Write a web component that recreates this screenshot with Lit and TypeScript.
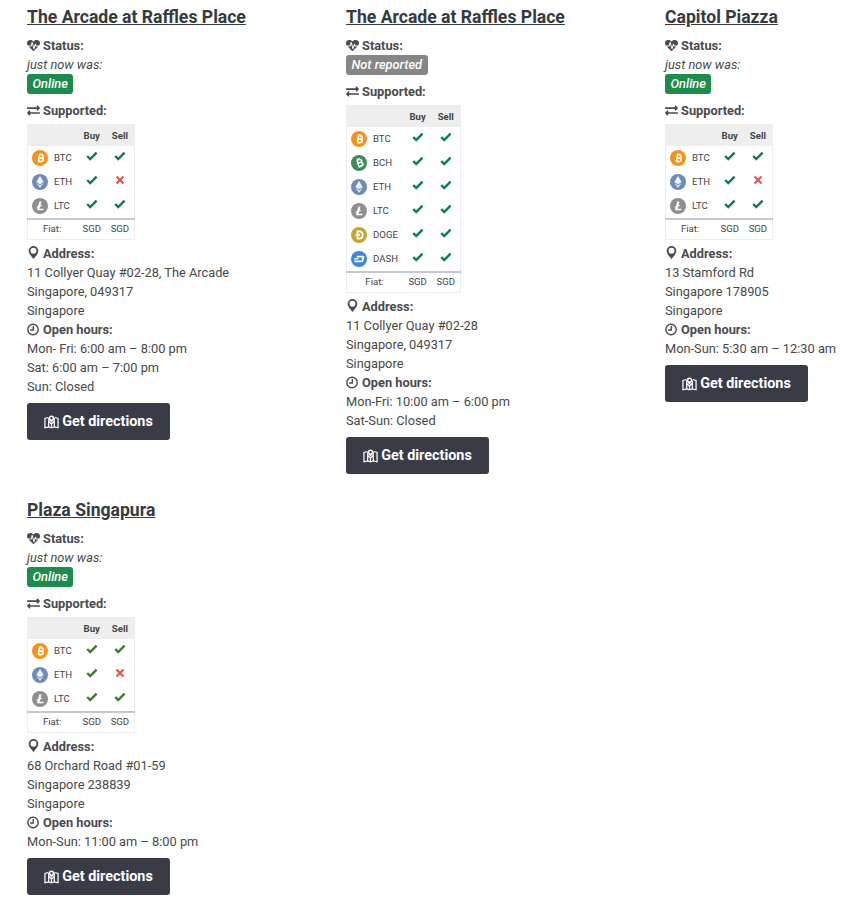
import { LitElement, html, css, svg } from 'lit';
import { customElement } from 'lit/decorators.js';

type Coin = { code: string; buy: boolean; sell: boolean };
type Shop = {
  name: string;
  ago?: string;
  online: boolean;
  coins: Coin[];
  address: string[];
  hours: string[];
  dark?: boolean;
};

const coinColors: Record<string, string> = {
  BTC: '#f7931a',
  BCH: '#3d8b57',
  ETH: '#6b8cb4',
  LTC: '#8e8e8e',
  DOGE: '#c2a633',
  DASH: '#3c85dc',
};

const coinGlyphs: Record<string, unknown> = {
  BTC: svg`<path fill="none" stroke="#fff" stroke-width="1.5" d="M6.400 4.700h2.700c1.300 0 2 .7 2 1.600s-.7 1.600-2 1.600H6.700m0 0h2.800c1.300 0 2.100.7 2.100 1.700s-.8 1.700-2.100 1.700H6.400M6.900 4.700v6.600M7.600 3.400v1.300M9.200 3.400v1.300M7.600 11.300v1.300M9.200 11.300v1.300" transform="rotate(10 8 8)"/>`,
  BCH: svg`<path fill="none" stroke="#fff" stroke-width="1.500" d="M6.400 4.700h2.700c1.300 0 2 .7 2 1.600s-.7 1.600-2 1.600H6.700m0 0h2.800c1.300 0 2.100.7 2.100 1.700s-.8 1.700-2.100 1.700H6.400M6.900 4.700v6.600M7.600 3.400v1.300M9.200 3.400v1.300M7.600 11.300v1.300M9.200 11.300v1.300" transform="rotate(-14 8 8)"/>`,
  ETH: svg`<path fill="#fff" opacity=".9" d="M8 2l3.700 6.100L8 10.300 4.300 8.100z"/><path fill="#fff" opacity=".75" d="M8 11.200l3.700-2.200L8 14.100 4.300 9z"/>`,
  LTC: svg`<path fill="#fff" d="M7.300 3.500h2.200L8.500 7.300l1.500-.6-.3 1.200-1.600.6-.6 2.200h4.100l-.4 1.600H4.900l.8-3-1.200.5.3-1.200 1.300-.5z"/>`,
  DOGE: svg`<path fill="none" stroke="#fff" stroke-width="1.800" d="M6.500 4.400h1.700c2.300 0 3.500 1.500 3.500 3.600s-1.200 3.600-3.500 3.600H6.500zM4.600 8h4.300"/>`,
  DASH: svg`<path fill="#fff" d="M6 4.800h6.300c.8 0 1.200.5 1 1.300l-.9 3.800c-.2.800-.8 1.300-1.700 1.300H3.200l.4-1.700h6.900l1-3H5.600zM3.200 7.200h4.500l-.4 1.400H2.800z"/>`,
};

const icons = {
  heart: html`<svg class="ic" viewBox="0 0 1792 1792"><path d="M1280 1024h305q-5 6-10 10.500t-9 7.500l-3 4-623 600q-18 18-44 18t-44-18l-624-602q-5-2-18-16h371q22 0 39-13.500t22-34.500l70-281 190 667q6 20 23 33t39 13q21 0 38-13t23-33l146-485 56 112q18 35 57 35zm512-428q0 145-103 300h-369l-111-221q-8-17-25.500-27t-36.500-8q-45 5-56 46l-129 430-196-686q-6-20-23.500-33t-39.500-13-39 13.500-22 34.500l-116 464h-423q-103-155-103-300 0-220 127-344t351-124q62 0 126.500 21.500t120 58 95.500 68.500 76 68q36-36 76-68t95.500-68.500 120-58 126.500-21.500q224 0 351 124t127 344z"/></svg>`,
  exchange: html`<svg class="ic" viewBox="0 0 512 512"><path d="M0 168v-16c0-13.255 10.745-24 24-24h360V80c0-21.367 25.899-32.042 40.971-16.971l80 80c9.372 9.373 9.372 24.569 0 33.941l-80 80C409.956 271.982 384 261.456 384 240v-48H24c-13.255 0-24-10.745-24-24zm488 152H128v-48c0-21.314-25.862-32.080-40.971-16.971l-80 80c-9.372 9.373-9.372 24.569 0 33.941l80 80C102.057 463.997 128 453.437 128 432v-48h360c13.255 0 24-10.745 24-24v-16c0-13.255-10.745-24-24-24z"/></svg>`,
  pin: html`<svg class="ic pin" viewBox="0 0 14 14"><path fill-rule="evenodd" d="M7 0a5.200 5.200 0 0 1 5.200 5.200c0 3.200-3.700 6.800-5.200 8.800-1.500-2-5.200-5.600-5.200-8.800A5.200 5.200 0 0 1 7 0zm0 2a3.200 3.200 0 1 0 0 6.400A3.200 3.200 0 0 0 7 2z"/></svg>`,
  clock: html`<svg class="ic" viewBox="0 0 14 14"><circle cx="6.500" cy="7" r="5.600" fill="none" stroke="currentColor" stroke-width="1.500"/><path fill="none" stroke="currentColor" stroke-width="1.500" d="M6.800 3.200v4.300H3.400"/></svg>`,
  map: html`<svg class="ic map" viewBox="0 0 16 14"><path fill="none" stroke="#fff" stroke-width="1.300" d="M4.600 2.200L1 3.200v10l4-1 3 1 3-1 4 1v-10l-3.600-1M5 3v9.200M11 3v9.200M5 6l3 3.500L11 6M8 9.500v3.500"/><path fill-rule="evenodd" fill="#fff" d="M8 0a3 3 0 0 1 3 3c0 1.800-2 3.300-3 4.800C7 6.300 5 4.800 5 3a3 3 0 0 1 3-3zm0 1.700a1.300 1.300 0 1 0 0 2.600 1.300 1.300 0 0 0 0-2.600z"/></svg>`,
};

const check = html`<svg class="mark" viewBox="0 0 12 10"><path fill="none" stroke="currentColor" stroke-width="2.400" d="M1.200 5l3 3 6.400-6.400"/></svg>`;
const cross = html`<svg class="mark no" viewBox="0 0 10 10"><path fill="none" stroke="currentColor" stroke-width="2.200" d="M1.500 1.500l7 7M8.500 1.500l-7 7"/></svg>`;

const three = [
  { code: 'BTC', buy: true, sell: true },
  { code: 'ETH', buy: true, sell: false },
  { code: 'LTC', buy: true, sell: true },
];

const shops: Shop[] = [
  {
    name: 'The Arcade at Raffles Place',
    ago: 'just now was:',
    online: true,
    coins: three,
    address: ['11 Collyer Quay #02-28, The Arcade', 'Singapore, 049317', 'Singapore'],
    hours: ['Mon- Fri: 6:00 am – 8:00 pm', 'Sat: 6:00 am – 7:00 pm', 'Sun: Closed'],
  },
  {
    name: 'The Arcade at Raffles Place',
    online: false,
    coins: ['BTC', 'BCH', 'ETH', 'LTC', 'DOGE', 'DASH'].map((code) => ({ code, buy: true, sell: true })),
    address: ['11 Collyer Quay #02-28', 'Singapore, 049317', 'Singapore'],
    hours: ['Mon-Fri: 10:00 am – 6:00 pm', 'Sat-Sun: Closed'],
  },
  {
    name: 'Capitol Piazza',
    ago: 'just now was:',
    online: true,
    coins: three,
    address: ['13 Stamford Rd', 'Singapore 178905', 'Singapore'],
    hours: ['Mon-Sun: 5:30 am – 12:30 am'],
  },
  {
    name: 'Plaza Singapura',
    ago: 'just now was:',
    online: true,
    coins: three,
    address: ['68 Orchard Road #01-59', 'Singapore 238839', 'Singapore'],
    hours: ['Mon-Sun: 11:00 am – 8:00 pm'],
    dark: true,
  },
];

@customElement('app-root')
export class AppRoot extends LitElement {
  static styles = css`
    :host {
      display: block;
      background: #fff;
      font-family: Roboto, "Liberation Sans", sans-serif;
      font-size: 12.800px;
      line-height: 19px;
      color: #484848;
    }
    .grid {
      display: grid;
      grid-template-columns: 319px 319px 1fr;
      row-gap: 19px;
      padding-left: 27px;
    }
    h2 {
      margin: 0 0 3px;
      padding-top: 1px;
      font-size: 17.600px;
      line-height: 32px;
      font-weight: 700;
      color: #343a40;
      text-decoration: underline;
    }
    .label {
      font-weight: 700;
      display: flex;
      align-items: center;
      gap: 3px;
      color: #4a4a50;
    }
    .ic {
      width: 13px;
      height: 13px;
      fill: currentColor;
      flex: none;
    }
    .ago {
      font-style: italic;
    }
    .badge {
      display: block;
      width: fit-content;
      height: 20px;
      line-height: 20px;
      padding: 0 5.500px;
      margin-bottom: 7px;
      border-radius: 3px;
      color: #fff;
      font-style: italic;
      font-weight: 500;
      background: #868686;
    }
    .badge.on {
      background: #1e8a4c;
    }
    table {
      border-collapse: collapse;
      margin: 4px 0;
      font-size: 9.600px;
      line-height: 14px;
      color: #444;
      border: 1px solid #eee;
    }
    th {
      background: #eee;
      font-weight: 700;
      height: 21px;
      padding: 0 4.800px;
      text-align: center;
    }
    td {
      height: 24px;
      padding: 0 4.800px;
      text-align: center;
    }
    td:first-child {
      padding-left: 4px;
      padding-right: 5.600px;
    }
    .coin {
      display: flex;
      align-items: center;
      gap: 6px;
    }
    .dot {
      width: 16px;
      height: 16px;
      flex: none;
    }
    tbody tr:last-child td {
      border-bottom: 2px solid #c4c7d0;
    }
    tfoot td {
      height: 18px;
      padding-bottom: 1px;
    }
    .mark {
      display: block;
      width: 12px;
      height: 10px;
      margin: 0 auto 5px;
      color: #0a7a5a;
    }
    .dark .mark {
      color: #3c7a2e;
    }
    .mark.no,
    .dark .mark.no {
      width: 10px;
      color: #e2574c;
    }
    .btn {
      display: inline-flex;
      align-items: center;
      justify-content: center;
      gap: 3px;
      box-sizing: border-box;
      width: 143px;
      height: 37px;
      margin-top: 7px;
      border-radius: 3px;
      background: #393c46;
      color: #fff;
      font-weight: 700;
      font-size: 14.400px;
    }
    .pin {
      position: relative;
      top: -1px;
    }
    .map {
      width: 15px;
      height: 14px;
    }
  `;

  renderTable(coins: Coin[]) {
    return html`<table>
      <thead><tr><th></th><th>Buy</th><th>Sell</th></tr></thead>
      <tbody>
        ${coins.map(
          (c) => html`<tr>
            <td>
              <div class="coin">
                <svg class="dot" viewBox="0 0 16 16">
                  <circle cx="8" cy="8" r="8" fill=${coinColors[c.code]}></circle>
                  ${coinGlyphs[c.code]}
                </svg>
                ${c.code}
              </div>
            </td>
            <td>${c.buy ? check : cross}</td>
            <td>${c.sell ? check : cross}</td>
          </tr>`,
        )}
      </tbody>
      <tfoot><tr><td>Fiat:</td><td>SGD</td><td>SGD</td></tr></tfoot>
    </table>`;
  }

  render() {
    return html`<div class="grid">
      ${shops.map(
        (s) => html`<section class=${s.dark ? 'dark' : ''}>
          <h2>${s.name}</h2>
          <div class="label">${icons.heart}<span>Status:</span></div>
          ${s.ago ? html`<div class="ago">${s.ago}</div>` : ''}
          <span class="badge ${s.online ? 'on' : ''}">${s.online ? 'Online' : 'Not reported'}</span>
          <div class="label">${icons.exchange}<span>Supported:</span></div>
          ${this.renderTable(s.coins)}
          <div class="label">${icons.pin}<span>Address:</span></div>
          ${s.address.map((l) => html`<div>${l}</div>`)}
          <div class="label">${icons.clock}<span>Open hours:</span></div>
          ${s.hours.map((l) => html`<div>${l}</div>`)}
          <div class="btn">${icons.map}<span>Get directions</span></div>
        </section>`,
      )}
    </div>`;
  }
}
